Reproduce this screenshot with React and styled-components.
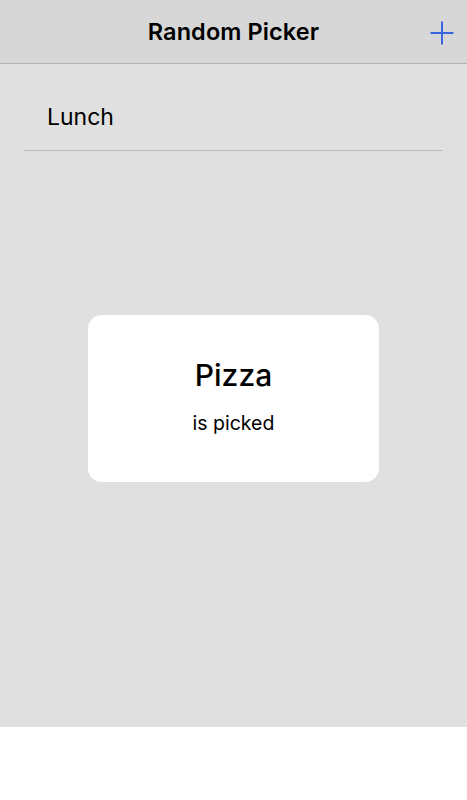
import React from 'react'
import styled, { createGlobalStyle } from 'styled-components'

const Global = createGlobalStyle`
  html, body {
    margin: 0;
    padding: 0;
    background: #ffffff;
    font-family: Inter, "Noto Sans", sans-serif;
    color: #000;
  }
`

const Screen = styled.div`
  width: 467px;
  height: 800px;
  display: flex;
  flex-direction: column;
  background: #ffffff;
`

const Header = styled.header`
  height: 63px;
  flex-shrink: 0;
  background: #d7d7d7;
  border-bottom: 1px solid #b3b3b3;
  display: flex;
  align-items: center;
  justify-content: center;
  position: relative;
`

const Title = styled.h1`
  margin: 0;
  font-size: 23.5px;
  font-weight: 600;
  letter-spacing: 0.1px;
`

const AddButton = styled.button`
  position: absolute;
  right: 13px;
  top: 20px;
  width: 25px;
  height: 25px;
  padding: 0;
  border: none;
  background: none;
  display: flex;
  align-items: center;
  justify-content: center;
`

const Body = styled.main`
  height: 663px;
  background: #e0e0e0;
  position: relative;
`

const List = styled.ul`
  list-style: none;
  margin: 0;
  padding: 0 24px 0 24px;
`

const Row = styled.li`
  height: 87px;
  display: flex;
  align-items: center;
  padding-left: 23px;
  padding-top: 19px;
  box-sizing: border-box;
  border-bottom: 1px solid #bcbcbc;
  font-size: 23px;
`

const Overlay = styled.div`
  position: absolute;
  inset: 0;
  display: flex;
  align-items: center;
  justify-content: center;
  padding-top: 6px;
`

const Card = styled.div`
  width: 291px;
  height: 167px;
  background: #ffffff;
  border-radius: 14px;
  box-sizing: border-box;
  display: flex;
  flex-direction: column;
  align-items: center;
  padding-top: 42px;
`

const Result = styled.div`
  font-size: 30px;
  font-weight: 500;
  line-height: 36px;
`

const Caption = styled.div`
  margin-top: 18px;
  font-size: 19.5px;
  line-height: 24px;
`

function PlusIcon() {
  return (
    <svg width="24" height="24" viewBox="0 0 24 24">
      <path d="M12 0.5V23.5M0.5 12H23.5" stroke="#3a63e0" strokeWidth="2" fill="none" />
    </svg>
  )
}

export default function App() {
  const lists = ['Lunch']
  return (
    <>
      <Global />
      <Screen>
        <Header>
          <Title>Random Picker</Title>
          <AddButton aria-label="Add">
            <PlusIcon />
          </AddButton>
        </Header>
        <Body>
          <List>
            {lists.map((name) => (
              <Row key={name}>{name}</Row>
            ))}
          </List>
          <Overlay>
            <Card>
              <Result>Pizza</Result>
              <Caption>is picked</Caption>
            </Card>
          </Overlay>
        </Body>
      </Screen>
    </>
  )
}
